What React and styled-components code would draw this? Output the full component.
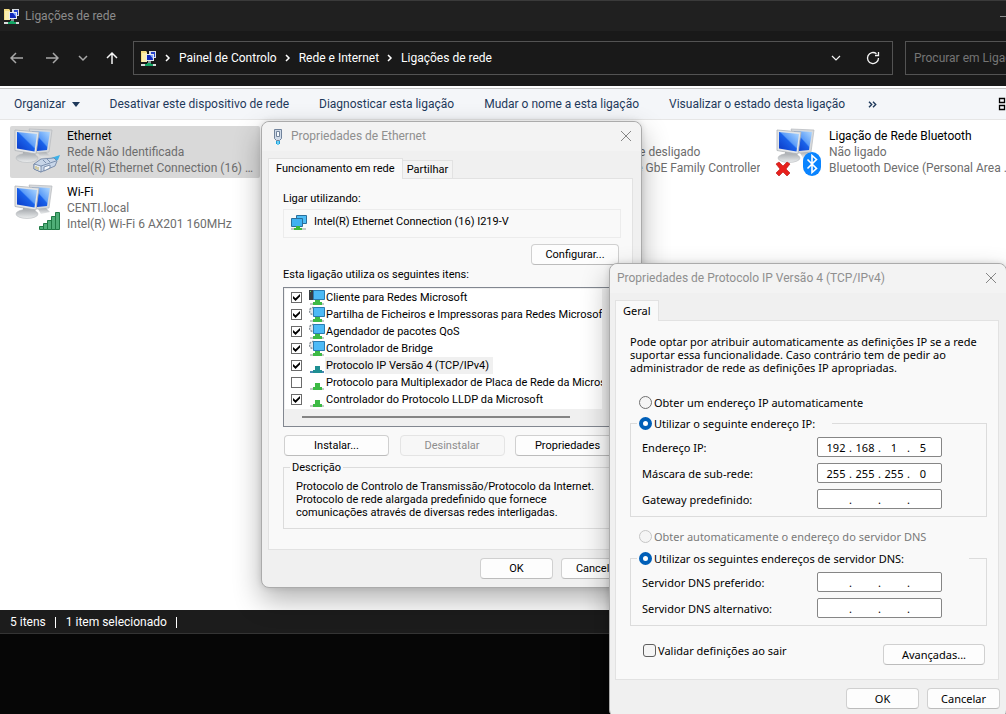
import React from "react";
import styled, { createGlobalStyle, css } from "styled-components";

const shell = `Roboto, "Open Sans", sans-serif`;
const classic = `Roboto, "Liberation Sans", Arial, sans-serif`;
const tahoma = `"Noto Sans", "DejaVu Sans Condensed", sans-serif`;

const GlobalStyle = createGlobalStyle`
  *, *::before, *::after { box-sizing: border-box; }
  body { margin: 0; background: #060606; }
  button, input { font: inherit; color: inherit; margin: 0; }
  p, h2 { margin: 0; font: inherit; }
`;

const Desktop = styled.div`
  position: relative;
  min-height: 100vh;
  overflow: hidden;
  background: #060606;
  font: 12px/16px ${shell};
`;

/* ---------- Explorer window ---------- */

const Explorer = styled.main`
  display: flex;
  flex-direction: column;
  border-top: 1px solid #3a3a3a;
  border-bottom: 1px solid #343434;
  background: #fff;
`;

const TitleBar = styled.header`
  display: flex;
  align-items: center;
  gap: 5px;
  height: 30px;
  padding-left: 4px;
  background: #202020;
  color: #8c8c8c;
`;

const Minimise = styled.button`
  margin-left: auto;
  width: 6px;
  height: 16px;
  padding: 0;
  border: 0;
  background: linear-gradient(#8c8c8c, #8c8c8c) 0 8px / 100% 1px no-repeat;
`;

const NavBar = styled.nav`
  display: flex;
  align-items: center;
  height: 55px;
  padding-bottom: 1px;
  background: #191919;
  color: #fff;
`;

const NavButtons = styled.div`
  display: flex;
  gap: 9px;
  width: 133px;
  padding-left: 5px;
`;

const IconButton = styled.button`
  display: grid;
  place-items: center;
  width: ${(p) => p.$w || 24}px;
  height: 24px;
  padding: 0;
  border: 0;
  background: none;
  color: ${(p) => (p.$dim ? "#a8a8a8" : "#f4f4f4")};
`;

const AddressBar = styled.div`
  display: flex;
  align-items: center;
  flex: 1;
  height: 34px;
  padding: 0 7px;
  border: 1px solid #535353;
`;

const Crumb = styled.a`
  color: #fff;
  text-decoration: none;
`;

const CrumbArrow = styled.svg`
  width: 22px;
  height: 8px;
`;

const AddressTools = styled.div`
  display: flex;
  gap: 13px;
  margin-left: auto;
`;

const Search = styled.input`
  width: 101px;
  height: 34px;
  margin-left: 12px;
  padding: 0 0 0 8px;
  border: 1px solid #535353;
  border-right: 0;
  border-radius: 0;
  background: #191919;
  &::placeholder { color: #757575; opacity: 1; }
`;

const CommandBar = styled.div`
  display: flex;
  align-items: center;
  height: 32px;
  margin-top: 2px;
  padding-left: 14px;
  border-top: 1px solid #c4c4c4;
  border-bottom: 1px solid #e6e6e6;
  background: #f4f6f9;
  color: #1e395b;
`;

const Commands = styled.div`
  display: flex;
  gap: 30px;
`;

const Command = styled.button`
  display: flex;
  align-items: center;
  gap: 6px;
  padding: 0;
  border: 0;
  background: none;
  white-space: nowrap;
`;

const MoreCommands = styled(Command)`
  margin-left: 23px;
`;

const ViewButton = styled(Command)`
  margin-left: auto;
  width: 8px;
  overflow: hidden;
`;

const Files = styled.ul`
  display: grid;
  grid-template-columns: repeat(4, 250px);
  grid-auto-rows: 52px;
  gap: 4px;
  min-height: 490px;
  margin: 0;
  padding: 6px 0 0 10px;
  list-style: none;
  align-content: start;
`;

const FileItem = styled.li`
  grid-column: ${(p) => p.$col};
  grid-row: ${(p) => p.$row};
  display: flex;
  gap: 4px;
  padding: 2px 4px 2px 1px;
  border-radius: 2px;
  background: ${(p) => (p.$selected ? "#d9d9d9" : "none")};
`;

const FileText = styled.div`
  min-width: 0;
  color: #6d6d6d;
`;

const Line = styled.div`
  overflow: hidden;
  text-overflow: ellipsis;
  white-space: nowrap;
  color: ${(p) => (p.$name ? "#000" : "inherit")};
`;

const StatusBar = styled.footer`
  display: flex;
  align-items: center;
  height: 23px;
  padding-left: 10px;
  background: #1c1c1c;
  color: #fff;
`;

const StatusCell = styled.span`
  padding-right: 10px;
  margin-right: 10px;
  background: linear-gradient(#fff, #fff) right 3px / 1px 11px no-repeat;
`;

/* ---------- Dialogs ---------- */

const Dialog = styled.section`
  position: absolute;
  left: ${(p) => p.$x}px;
  top: ${(p) => p.$y}px;
  width: ${(p) => p.$w}px;
  border: 1px solid #ababab;
  border-radius: 8px;
  background: #f0f0f0;
  box-shadow: 0 12px 28px rgba(0, 0, 0, 0.3), 0 0 6px rgba(0, 0, 0, 0.12);
  color: #000;
  font: 11px/13px ${(p) => p.$font};
`;

const DialogTitle = styled.header`
  display: flex;
  align-items: center;
  gap: 7px;
  height: 29px;
  padding: 0 3px 1px ${(p) => p.$left}px;
  border-radius: 8px 8px 0 0;
  background: #f3f3f3;
  color: #8f8f8f;
  font: 12px/16px ${shell};
`;

const CloseButton = styled(IconButton)`
  margin-left: auto;
  color: #858585;
`;

const Tabs = styled.div`
  display: flex;
  align-items: flex-end;
  padding: 7px ${(p) => p.$side}px 0;
`;

const Tab = styled.button`
  height: ${(p) => (p.$active ? 21 : 18)}px;
  padding: 0 ${(p) => (p.$active ? 7 : 4)}px 1px;
  margin-bottom: ${(p) => (p.$active ? -1 : 0)}px;
  border: 1px solid #e2e2e2;
  border-bottom: 0;
  border-left-width: ${(p) => (p.$active ? 1 : 0)}px;
  background: ${(p) => (p.$active ? "#f9f9f9" : "#f3f3f3")};
  z-index: 1;
`;

const Panel = styled.div`
  display: flex;
  flex-direction: column;
  margin: 0 ${(p) => p.$side + 2}px 0 ${(p) => p.$side}px;
  padding: 13px 11px ${(p) => p.$bottom}px 14px;
  border: 1px solid #e2e2e2;
  background: #f9f9f9;
`;

const Adapter = styled.div`
  display: flex;
  gap: 7px;
  height: 29px;
  margin: 4px 0 6px;
  padding: 4px 7px;
  border: 1px solid #ececec;
`;

const AdapterName = styled.span`
  padding-top: 1px;
`;

const Button = styled.button`
  width: ${(p) => p.$w}px;
  height: 21px;
  padding: 0;
  border: 1px solid #d0d0d0;
  border-bottom-color: #bcbcbc;
  border-radius: 4px;
  background: #fdfdfd;
  &:disabled {
    border-color: #e4e4e4;
    background: #f7f7f7;
    color: #8e8e8e;
  }
`;

const ButtonRow = styled.div`
  display: flex;
  justify-content: ${(p) => p.$justify || "flex-end"};
  gap: 8px;
  padding: ${(p) => p.$pad || "0"};
`;

const Caption = styled.h2`
  padding-top: 3px;
`;

const ItemBox = styled.div`
  display: grid;
  grid-template-columns: 1fr 17px;
  grid-template-rows: 120px 16px;
  height: 140px;
  margin: 6px 0 8px;
  padding: 1px;
  border: 1px solid #828790;
  background: #f0f0f0;
`;

const ItemList = styled.ul`
  margin: 0;
  padding: 0 0 0 6px;
  list-style: none;
  background: #fff;
  overflow: hidden;
`;

const Item = styled.li`
  display: flex;
  align-items: center;
  height: 17px;
`;

const ItemLabel = styled.label`
  display: flex;
  align-items: center;
  white-space: nowrap;
`;

const ItemName = styled.span`
  height: 17px;
  padding: 2px 4px 2px 1px;
  background: ${(p) => (p.$selected ? "#f0f0f0" : "none")};
`;

const ScrollThumb = styled.div`
  align-self: center;
  height: 2px;
  margin: 0 32px 0 17px;
  background: #858585;
`;

const CheckBox = styled.input.attrs({ type: "checkbox" })`
  appearance: none;
  display: grid;
  place-items: center;
  flex: none;
  ${(p) =>
    p.$round
      ? css`width: 13px; height: 13px; border: 1px solid #5f5f5f; border-radius: 3px; background: #f5f5f5;`
      : css`width: 11px; height: 11px; border: 1px solid #6b6b6b; background: #fff;`}
  &:checked::after {
    content: "";
    width: 7px;
    height: 7px;
    background: #000;
    clip-path: polygon(0 30%, 36% 62%, 100% 0, 100% 34%, 36% 100%, 0 64%);
  }
`;

const Radio = styled.input.attrs({ type: "radio" })`
  appearance: none;
  flex: none;
  width: 13px;
  height: 13px;
  border: 1px solid #707070;
  border-radius: 50%;
  background: #f5f5f5;
  &:checked { border: 4px solid #005fb8; background: #fff; }
  &:disabled { border-color: #c6c6c6; }
`;

const Choice = styled.label`
  display: flex;
  align-items: center;
  gap: 2px;
  height: ${(p) => p.$h || 17}px;
  margin-top: ${(p) => p.$top || 0}px;
  padding-left: ${(p) => p.$left || 0}px;
  color: ${(p) => (p.$dim ? "#7a7a7a" : "inherit")};
`;

const Group = styled.fieldset`
  min-width: 0;
  margin: ${(p) => p.$margin || "0"};
  padding: ${(p) => p.$pad};
  border: 1px solid #dcdcdc;
`;

const Legend = styled.legend`
  width: ${(p) => p.$w || "auto"};
  margin-left: ${(p) => p.$shift}px;
  padding: 0 2px;
`;

const Intro = styled.p`
  padding: 1px 0 20px;
  white-space: nowrap;
`;

const Fields = styled.div`
  display: grid;
  gap: 6px;
`;

const FieldRow = styled.div`
  display: flex;
  align-items: center;
  justify-content: space-between;
  height: 20px;
`;

const IpBox = styled.div`
  display: flex;
  align-items: center;
  width: 125px;
  height: 20px;
  padding: 0 5px;
  border: 1px solid #868686;
  border-radius: 2px;
  background: #fff;
`;

const Octet = styled.input`
  width: 26px;
  height: 16px;
  padding: 0;
  border: 0;
  background: none;
  text-align: center;
`;

const Dot = styled.span`
  width: 4px;
  text-align: center;
`;

const Bottom = styled.div`
  display: flex;
  align-items: flex-start;
  justify-content: space-between;
  padding: 18px 2px 0 13px;
`;

/* ---------- Drawings ---------- */

const FolderNet = () => (
  <svg width="16" height="17" viewBox="0 0 16 17" aria-hidden="true">
    <path d="M0 1h5l1 1v10H0z" fill="#f5dd83" />
    <path d="M1 3h5v9H1z" fill="#fbeeb0" />
    <path d="M8 1h7v7H8z" fill="#d9dde2" />
    <path d="M10 2h4v5h-4z" fill="#2440c8" />
    <path d="M5 4h8v7H5z" fill="#e8ebef" />
    <path d="M6 5h6v5H6z" fill="#1028b8" />
    <path d="M9 5h3v4z" fill="#7fa5ff" />
    <path d="M7 11h3v2H7z" fill="#8b9097" />
    <path d="M0 14h15v2H0z" fill="#d8dcdc" />
    <path d="M6 13h4v1h2v2H4v-2h2z" fill="#15a565" />
  </svg>
);

const Drawing = styled.svg`
  flex: none;
`;

const Monitors = ({ children }) => (
  <Drawing width="52" height="48" viewBox="0 0 52 48" aria-hidden="true">
    <defs>
      <linearGradient id="screen" x1="0" y1="1" x2="1" y2="0">
        <stop offset="0" stopColor="#0a37c4" />
        <stop offset=".5" stopColor="#1a62ea" />
        <stop offset=".55" stopColor="#5b9cf8" />
        <stop offset="1" stopColor="#b4dbff" />
      </linearGradient>
      <linearGradient id="stand" x1="0" y1="0" x2="0" y2="1">
        <stop offset="0" stopColor="#aaaeb2" />
        <stop offset="1" stopColor="#eceeef" />
      </linearGradient>
    </defs>
    <path d="M18 1l23 1-3 22-12 1z" fill="#d7dadd" stroke="#b4b8bb" strokeWidth=".7" />
    <path d="M21 3l18 1-3 18-10 1z" fill="url(#screen)" />
    <path d="M27 25l8-1 4 4-9 2z" fill="url(#stand)" />
    <path d="M12 23l12 2 1 5H12z" fill="#a9adb0" />
    <ellipse cx="16" cy="30" rx="11" ry="4.500" fill="url(#stand)" stroke="#b7babd" strokeWidth=".6" />
    <path d="M4 2l24 2-3 22-21-3.500z" fill="#e4e6e8" stroke="#aeb2b6" strokeWidth=".8" />
    <path d="M6 4l20 2-2.500 17.500L6 20.500z" fill="url(#screen)" />
    <g transform="translate(4 0)">{children}</g>
  </Drawing>
);

const Plug = () => (
  <g stroke="#6a7fa0" strokeWidth=".8" strokeLinejoin="round">
    <path d="M33 31l12-4-2 5-6 3z" fill="#3db0e8" stroke="none" />
    <path d="M19 36l7-5 13-1 3 3-2 5-14 6-7-3z" fill="#c7d5e8" />
    <path d="M19 36l7 2v6l-7-3zM26 38l15-5" fill="#e7edf6" />
    <path d="M28 32l3 3M32 31l3 3M29 39l6-2v3l-6 3z" fill="#f3f7fc" />
    <path d="M21 38v3M23 39v3" stroke="#b09a30" />
  </g>
);

const Signal = () => (
  <g fill="#4fae78" stroke="#1f7a45" strokeWidth="1">
    <path d="M24.500 42.500h4v3h-4zM28.500 39.500h4v6h-4zM32.500 36.500h4v9h-4zM36.500 32.500h4v13h-4zM40.500 28.500h4v17h-4z" />
  </g>
);

const Bluetooth = () => (
  <g>
    <rect x="26" y="24" width="18" height="24" rx="9" fill="#0a84ff" />
    <path d="M30.500 31.500l9 9-4.500 4V27.500l4.500 4-9 9" fill="none" stroke="#fff" strokeWidth="1.600" />
    <path d="M-1 36l3-2 4 4 4-4 3 2-4 5 4 4-3 3-4-4-4 4-3-3 4-4z" fill="#e8201c" stroke="#b5100f" strokeWidth=".6" />
  </g>
);

const AdapterIcon = () => (
  <svg width="16" height="18" viewBox="0 0 16 18" aria-hidden="true">
    <path d="M5.500 1.500h10v8h-10z" fill="#4fbdf5" stroke="#2a6f9c" />
    <path d="M.500 4.500h11v8H.5z" fill="#3fb2f2" stroke="#2a6f9c" />
    <path d="M0 14h15v2H0z" fill="#c5c9c9" />
    <path d="M5 12h4v2h2v2H3v-2h2z" fill="#3cb83c" />
  </svg>
);

const JackIcon = () => (
  <svg width="12" height="17" viewBox="0 0 12 17" aria-hidden="true">
    <path d="M2.500 1.500h7v9l-2 2h-3l-2-2z" fill="#cfdae8" stroke="#71839b" />
    <path d="M4.500 3.500h3v5h-3z" fill="#f4f8fc" stroke="#71839b" />
    <path d="M4 13h1v3H4zM7 13h1v3H7z" fill="#1ba3dc" />
    <path d="M5 13h2v4H5z" fill="#6fcdf1" />
  </svg>
);

const ItemDrawing = styled.svg`
  flex: none;
  margin-left: 7px;
`;

const ItemIcon = ({ kind }) => (
  <ItemDrawing width="16" height="17" viewBox="0 0 16 17" aria-hidden="true">
    {kind === "client" && <path d="M0 1h5v10H0z" fill="#3a3f45" />}
    {kind === "client" && <path d="M1 2h1v1H1z" fill="#5ce05c" />}
    {kind === "service" && (
      <circle cx="4" cy="5" r="3.500" fill="#e4e7ea" stroke="#8c9299" strokeWidth="1.500" strokeDasharray="2 1" />
    )}
    <path d="M1 14h14v2H1z" fill={kind === "selected" ? "#4a86b4" : "#c3c8c8"} />
    <path d="M6 9h5v4h2v3H4v-3h2z" fill={kind === "selected" ? "#1f8f92" : "#3dba45"} />
    {(kind === "client" || kind === "service") && (
      <path d="M4.500 1.500h11v9h-11z" fill="#4dbaf6" stroke="#2b7bb0" />
    )}
  </ItemDrawing>
);

const Chevron = () => (
  <CrumbArrow viewBox="0 0 22 8" aria-hidden="true">
    <path d="M9 1l3 3-3 3" fill="none" stroke="#fff" strokeWidth="1.500" />
  </CrumbArrow>
);

const Stroke = ({ d, size = 14, width = 1.5 }) => (
  <svg width={size} height={size} viewBox="0 0 14 14" fill="none" stroke="currentColor" strokeWidth={width} aria-hidden="true">
    <path d={d} />
  </svg>
);

const Close = () => (
  <CloseButton type="button" aria-label="Fechar">
    <Stroke d="M2 2l10 10M12 2L2 12" width={1} />
  </CloseButton>
);

/* ---------- Data ---------- */

const connections = [
  { name: "Ethernet", state: "Rede Não Identificada", device: "Intel(R) Ethernet Connection (16) I219-V", badge: <Plug />, col: 1, row: 1, selected: true },
  { name: "Wi-Fi", state: "CENTI.local", device: "Intel(R) Wi-Fi 6 AX201 160MHz", badge: <Signal />, col: 1, row: 2 },
  { name: "Ethernet 3", state: "Cabo de rede desligado", device: "Realtek PCIe GbE Family Controller", badge: <Plug />, col: 3, row: 1 },
  { name: "Ligação de Rede Bluetooth", state: "Não ligado", device: "Bluetooth Device (Personal Area Network)", badge: <Bluetooth />, col: 4, row: 1 },
];

const items = [
  ["Cliente para Redes Microsoft", "client", true],
  ["Partilha de Ficheiros e Impressoras para Redes Microsoft", "service", true],
  ["Agendador de pacotes QoS", "service", true],
  ["Controlador de Bridge", "service", true],
  ["Protocolo IP Versão 4 (TCP/IPv4)", "selected", true],
  ["Protocolo para Multiplexador de Placa de Rede da Microsoft", "protocol", false],
  ["Controlador do Protocolo LLDP da Microsoft", "protocol", true],
];

const IpField = ({ label, value = ["", "", "", ""] }) => (
  <FieldRow role="group" aria-label={label}>
    <span>{label}</span>
    <IpBox>
      {value.map((v, i) => (
        <React.Fragment key={i}>
          {i > 0 && <Dot>.</Dot>}
          <Octet defaultValue={v} maxLength={3} aria-label={`${label} ${i + 1}`} />
        </React.Fragment>
      ))}
    </IpBox>
  </FieldRow>
);

const EthernetDialog = () => (
  <Dialog $x={261} $y={121} $w={381} $font={classic}>
    <DialogTitle $left={10}>
      <JackIcon />
      Propriedades de Ethernet
      <Close />
    </DialogTitle>
    <Tabs $side={6}>
      <Tab $active>Funcionamento em rede</Tab>
      <Tab>Partilhar</Tab>
    </Tabs>
    <Panel $side={6} $bottom={20}>
      <p>Ligar utilizando:</p>
      <Adapter>
        <AdapterIcon />
        <AdapterName>Intel(R) Ethernet Connection (16) I219-V</AdapterName>
      </Adapter>
      <ButtonRow $pad="0 2px 0 0">
        <Button $w={88}>Configurar...</Button>
      </ButtonRow>
      <Caption>Esta ligação utiliza os seguintes itens:</Caption>
      <ItemBox>
        <ItemList>
          {items.map(([name, kind, on]) => (
            <Item key={name}>
              <ItemLabel>
                <CheckBox defaultChecked={on} />
                <ItemIcon kind={kind} />
                <ItemName $selected={kind === "selected"}>{name}</ItemName>
              </ItemLabel>
            </Item>
          ))}
        </ItemList>
        <span />
        <ScrollThumb />
      </ItemBox>
      <ButtonRow $justify="space-between" $pad="0 1px">
        <Button $w={105}>Instalar...</Button>
        <Button $w={105} disabled>Desinstalar</Button>
        <Button $w={105}>Propriedades</Button>
      </ButtonRow>
      <Group $margin="5px 0 0" $pad="6px 12px 9px">
        <Legend $shift={-6}>Descrição</Legend>
        <p>
          Protocolo de Controlo de Transmissão/Protocolo da Internet.<br />
          Protocolo de rede alargada predefinido que fornece<br />
          comunicações através de diversas redes interligadas.
        </p>
      </Group>
    </Panel>
    <ButtonRow $pad="8px 7px">
      <Button $w={73}>OK</Button>
      <Button $w={73}>Cancelar</Button>
    </ButtonRow>
  </Dialog>
);

const Ipv4Dialog = () => (
  <Dialog $x={609} $y={263} $w={398} $font={tahoma}>
    <DialogTitle $left={7}>
      Propriedades de Protocolo IP Versão 4 (TCP/IPv4)
      <Close />
    </DialogTitle>
    <Tabs $side={5}>
      <Tab $active>Geral</Tab>
    </Tabs>
    <Panel $side={5} $bottom={14}>
      <Intro>
        Pode optar por atribuir automaticamente as definições IP se a rede<br />
        suportar essa funcionalidade. Caso contrário tem de pedir ao<br />
        administrador de rede as definições IP apropriadas.
      </Intro>
      <Choice $left={9}>
        <Radio name="ip" />
        Obter um endereço IP automaticamente
      </Choice>
      <Group $margin="4px 0 0" $pad="5px 44px 7px 11px">
        <Legend $w="195px" $shift={-5}>
          <Choice>
            <Radio name="ip" defaultChecked />
            Utilizar o seguinte endereço IP:
          </Choice>
        </Legend>
        <Fields>
          <IpField label="Endereço IP:" value={["192", "168", "1", "5"]} />
          <IpField label="Máscara de sub-rede:" value={["255", "255", "255", "0"]} />
          <IpField label="Gateway predefinido:" />
        </Fields>
      </Group>
      <Choice $left={9} $top={11} $dim>
        <Radio name="dns" disabled />
        Obter automaticamente o endereço do servidor DNS
      </Choice>
      <Group $margin="5px 0 0" $pad="5px 44px 7px 11px">
        <Legend $w="332px" $shift={-5}>
          <Choice>
            <Radio name="dns" defaultChecked />
            Utilizar os seguintes endereços de servidor DNS:
          </Choice>
        </Legend>
        <Fields>
          <IpField label="Servidor DNS preferido:" />
          <IpField label="Servidor DNS alternativo:" />
        </Fields>
      </Group>
      <Bottom>
        <Choice $h={13}>
          <CheckBox $round />
          Validar definições ao sair
        </Choice>
        <Button $w={102}>Avançadas...</Button>
      </Bottom>
    </Panel>
    <ButtonRow $pad="8px 6px">
      <Button $w={73}>OK</Button>
      <Button $w={73}>Cancelar</Button>
    </ButtonRow>
  </Dialog>
);

export default function App() {
  return (
    <Desktop>
      <GlobalStyle />
      <Explorer>
        <TitleBar>
          <FolderNet />
          Ligações de rede
          <Minimise aria-label="Minimizar" />
        </TitleBar>
        <NavBar>
          <NavButtons>
            <IconButton $dim aria-label="Anterior"><Stroke d="M13 7H1M6 2L1 7l5 5" /></IconButton>
            <IconButton $dim $w={28} aria-label="Seguinte"><Stroke d="M1 7h12M8 2l5 5-5 5" /></IconButton>
            <IconButton $dim $w={16} aria-label="Recentes"><Stroke d="M3 5l4 4 4-4" /></IconButton>
            <IconButton aria-label="Subir"><Stroke d="M7 13V2M2 7l5-5 5 5" /></IconButton>
          </NavButtons>
          <AddressBar>
            <FolderNet />
            <Chevron />
            <Crumb href="#painel">Painel de Controlo</Crumb>
            <Chevron />
            <Crumb href="#rede">Rede e Internet</Crumb>
            <Chevron />
            <Crumb href="#ligacoes">Ligações de rede</Crumb>
            <AddressTools>
              <IconButton aria-label="Mostrar histórico"><Stroke d="M3 5l4 4 4-4" width={1.2} /></IconButton>
              <IconButton aria-label="Atualizar"><Stroke d="M12.500 7A5.500 5.500 0 1 1 10.500 2.800M12.500 1v3.500H9" width={1.3} /></IconButton>
            </AddressTools>
          </AddressBar>
          <Search placeholder="Procurar em Ligações de rede" aria-label="Procurar em Ligações de rede" />
        </NavBar>
        <CommandBar>
          <Commands>
            <Command>
              Organizar
              <svg width="8" height="5" viewBox="0 0 8 5" aria-hidden="true"><path d="M0 0h8L4 5z" fill="#1e395b" /></svg>
            </Command>
            <Command>Desativar este dispositivo de rede</Command>
            <Command>Diagnosticar esta ligação</Command>
            <Command>Mudar o nome a esta ligação</Command>
            <Command>Visualizar o estado desta ligação</Command>
          </Commands>
          <MoreCommands aria-label="Mais comandos">
            <svg width="9" height="7" viewBox="0 0 9 7" fill="none" stroke="#1e395b" strokeWidth="1.400" aria-hidden="true">
              <path d="M1 .8l2.700 2.700L1 6.200M5 .8l2.700 2.700L5 6.200" />
            </svg>
          </MoreCommands>
          <ViewButton aria-label="Alterar a vista">
            <Drawing width="14" height="14" viewBox="0 0 14 14" fill="none" stroke="#000" strokeWidth="1.300" aria-hidden="true">
              <path d="M1.500 1.500h5v4h-5zM1.500 8.500h5v4h-5z" />
            </Drawing>
          </ViewButton>
        </CommandBar>
        <Files>
          {connections.map((c) => (
            <FileItem key={c.name} $col={c.col} $row={c.row} $selected={c.selected}>
              <Monitors>{c.badge}</Monitors>
              <FileText>
                <Line $name>{c.name}</Line>
                <Line>{c.state}</Line>
                <Line>{c.device}</Line>
              </FileText>
            </FileItem>
          ))}
        </Files>
        <StatusBar>
          <StatusCell>5 itens</StatusCell>
          <StatusCell>1 item selecionado</StatusCell>
        </StatusBar>
      </Explorer>
      <EthernetDialog />
      <Ipv4Dialog />
    </Desktop>
  );
}
